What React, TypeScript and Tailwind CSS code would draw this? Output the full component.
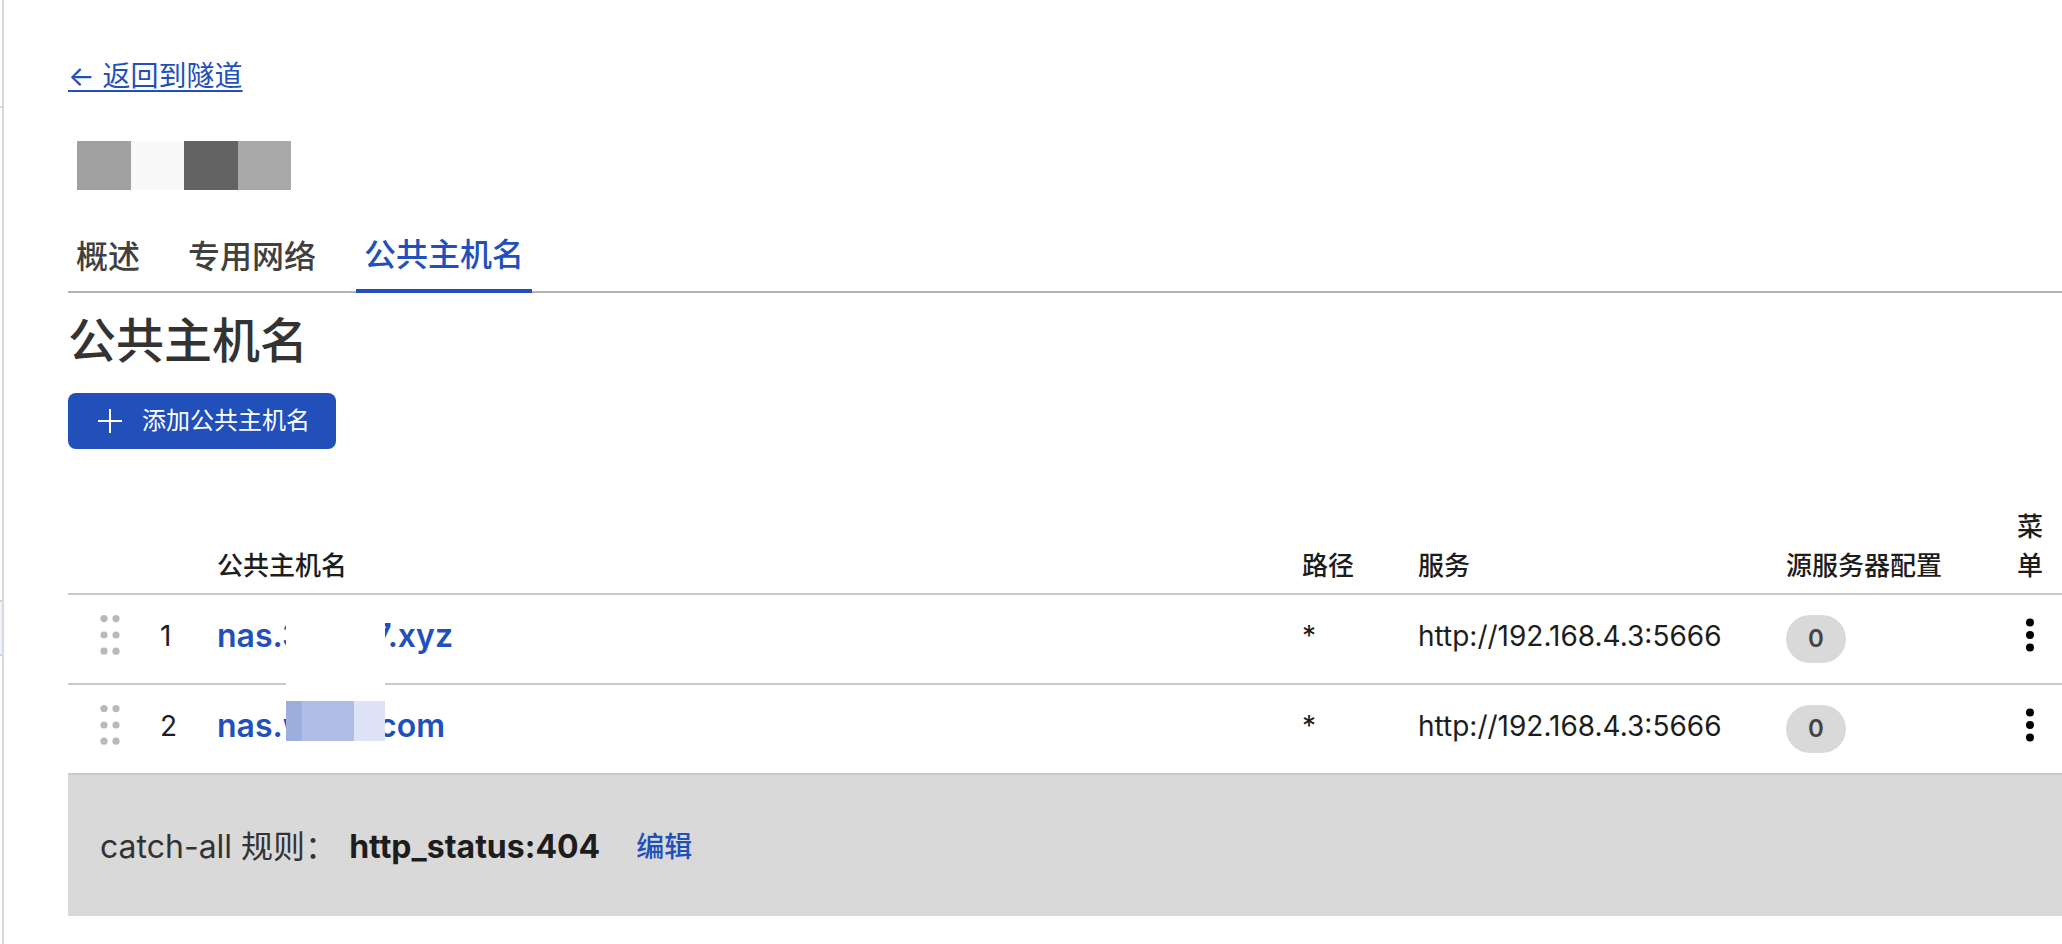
type Rule = {
  order: number;
  hostStart: string;
  hostEnd: string;
  hostWidth: string;
  path: string;
  service: string;
  origins: number;
  masked: "blank" | "mosaic";
};

const rules: Rule[] = [
  {
    order: 1,
    hostStart: "nas.3",
    hostEnd: "7.xyz",
    hostWidth: "w-[236px]",
    path: "*",
    service: "http://192.168.4.3:5666",
    origins: 0,
    masked: "blank",
  },
  {
    order: 2,
    hostStart: "nas.w",
    hostEnd: ".com",
    hostWidth: "w-[228px]",
    path: "*",
    service: "http://192.168.4.3:5666",
    origins: 0,
    masked: "mosaic",
  },
];

function DragHandle() {
  return (
    <svg width="20" height="40" viewBox="0 0 20 40" fill="#b9b9b9" aria-hidden="true">
      {[3.6, 20, 36.2].map((cy) => (
        <g key={cy}>
          <circle cx="4" cy={cy} r="3.6" />
          <circle cx="16" cy={cy} r="3.6" />
        </g>
      ))}
    </svg>
  );
}

function MoreIcon() {
  return (
    <svg width="8" height="34" viewBox="0 0 8 34" fill="#000" aria-hidden="true">
      <circle cx="4" cy="4.5" r="4" />
      <circle cx="4" cy="17" r="4" />
      <circle cx="4" cy="29.5" r="4" />
    </svg>
  );
}

function PlusIcon() {
  return (
    <svg width="24" height="24" viewBox="0 0 24 24" stroke="#fff" strokeWidth="2" aria-hidden="true">
      <path d="M12 0v24M0 12h24" />
    </svg>
  );
}

function Sidebar() {
  return (
    <aside className="flex w-1 shrink-0 flex-col border-r-2 border-[#d9d9d9]">
      <div className="h-[108px] border-b-2 border-[#d9d9d9]" />
      <div className="mt-[492px] h-14 border-y-2 border-[#bed9fb] bg-[#ecf4fd]" />
    </aside>
  );
}

function Tabs() {
  const tab = "border-b-4 px-2 text-[32px] leading-[48px] font-medium";
  return (
    <nav className="flex h-16 items-end gap-8 shadow-[inset_0_-2px_0_#b2b2b2]">
      <a href="#overview" className={`${tab} border-transparent pb-2 text-[#404040]`}>
        概述
      </a>
      <a href="#private" className={`${tab} border-transparent pb-2 text-[#404040]`}>
        专用网络
      </a>
      <a href="#public" aria-current="page" className={`${tab} border-[#2150bb] pb-2.5 text-[#2150bb]`}>
        公共主机名
      </a>
    </nav>
  );
}

function Mask({ kind }: { kind: Rule["masked"] }) {
  if (kind === "blank") {
    return <span className="absolute -top-2 left-[69px] h-[88px] w-[99px] bg-white" />;
  }
  return (
    <span className="absolute -top-3 left-[69px] flex h-12 w-[99px] flex-col bg-white pt-2">
      <span className="flex h-10">
        <span className="w-4 bg-[#9cadde]" />
        <span className="flex-1 bg-[#b0bee6]" />
        <span className="w-[31px] bg-[#dde3f5]" />
      </span>
    </span>
  );
}

export default function App() {
  const head = "p-0 pb-2 text-left align-bottom font-medium";
  const cell = "p-0 pt-5 align-top";
  return (
    <div className="flex min-h-screen overflow-hidden bg-white font-['Inter','Noto_Sans_CJK_SC',sans-serif] text-[#1d1d1d]">
      <Sidebar />
      <main className="min-w-0 flex-1 pt-14 pl-16">
        <a
          href="#tunnels"
          className="inline-block text-[28px] leading-[40px] text-[#2150bb] underline decoration-2 underline-offset-4"
        >
          ← 返回到隧道
        </a>

        <div className="mt-[45px] ml-[9px] flex h-[49px] w-[214px]">
          <span className="flex-1 bg-[#a0a0a0]" />
          <span className="flex-1 bg-[#f8f8f8]" />
          <span className="flex-1 bg-[#636363]" />
          <span className="flex-1 bg-[#a8a8a8]" />
        </div>

        <div className="mt-[39px]">
          <Tabs />
        </div>

        <h1 className="mt-3 text-5xl leading-[72px] font-medium text-[#333]">公共主机名</h1>

        <button
          type="button"
          className="mt-4 flex h-14 items-center gap-5 rounded-lg bg-[#2150bb] pr-[26px] pl-[30px] text-2xl text-white"
        >
          <PlusIcon />
          添加公共主机名
        </button>

        <table className="mt-[58px] w-full table-fixed border-collapse">
          <colgroup>
            <col className="w-[92px]" />
            <col className="w-[57px]" />
            <col />
            <col className="w-[116px]" />
            <col className="w-[368px]" />
            <col className="w-[231px]" />
            <col className="w-[45px]" />
          </colgroup>
          <thead>
            <tr className="border-b-2 border-[#c9c9c9] text-[26px] leading-[39px]">
              <th className={head} aria-label="拖动" />
              <th className={head} aria-label="序号" />
              <th className={head}>公共主机名</th>
              <th className={head}>路径</th>
              <th className={head}>服务</th>
              <th className={head}>源服务器配置</th>
              <th className={head}>
                <span className="block w-[26px]">菜单</span>
              </th>
            </tr>
          </thead>
          <tbody>
            {rules.map((rule) => (
              <tr key={rule.order} className="h-[90px] border-b-2 border-[#c9c9c9] text-[28px] leading-[42px]">
                <td className={`${cell} pl-8`}>
                  <DragHandle />
                </td>
                <td className={cell}>{rule.order}</td>
                <td className={cell}>
                  <div className="relative">
                    <a
                      href="#hostname"
                      className={`${rule.hostWidth} flex justify-between text-[32px] font-semibold text-[#2150bb]`}
                    >
                      <span>{rule.hostStart}</span>
                      <span>{rule.hostEnd}</span>
                    </a>
                    <Mask kind={rule.masked} />
                  </div>
                </td>
                <td className={cell}>{rule.path}</td>
                <td className={cell}>{rule.service}</td>
                <td className={cell}>
                  <span className="flex h-12 w-[60px] items-center justify-center rounded-full bg-[#d9d9d9] text-2xl font-semibold text-[#444]">
                    {rule.origins}
                  </span>
                </td>
                <td className={cell}>
                  <button type="button" aria-label="菜单" className="flex h-10 w-[26px] items-center justify-center">
                    <MoreIcon />
                  </button>
                </td>
              </tr>
            ))}
          </tbody>
        </table>

        <div className="flex h-[141px] items-center bg-[#d9d9d9] px-8 pt-0.5 text-[32px] leading-[48px]">
          <span className="text-[#333]">catch-all 规则：</span>
          <strong className="ml-3 font-bold">http_status:404</strong>
          <a href="#edit" className="ml-9 text-[28px] font-medium text-[#2150bb]">
            编辑
          </a>
        </div>
      </main>
    </div>
  );
}
